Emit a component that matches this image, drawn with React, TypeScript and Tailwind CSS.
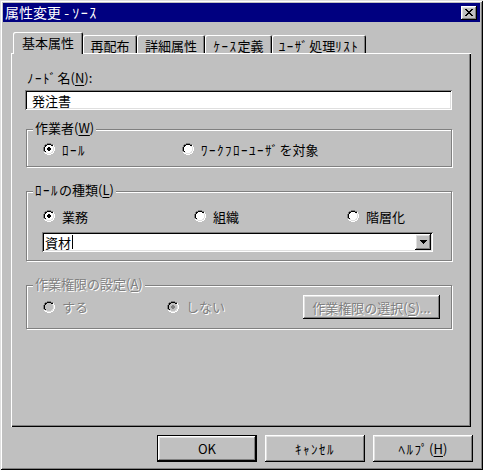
import React from "react";

type PixelArtProps = {
  rows: string[];
  colors: Record<string, string>;
  className?: string;
};

// tiny bitmap glyphs (radio, close X, combo arrow) drawn pixel by pixel
function PixelArt({ rows, colors, className = "" }: PixelArtProps) {
  const w = rows[0].length;
  const h = rows.length;
  const rects: React.ReactNode[] = [];
  rows.forEach((row, y) =>
    row.split("").forEach((ch, x) => {
      const fill = colors[ch];
      if (fill) rects.push(<rect key={`${x}-${y}`} x={x} y={y} width={1} height={1} fill={fill} />);
    })
  );
  return (
    <svg
      width={w}
      height={h}
      viewBox={`0 0 ${w} ${h}`}
      shapeRendering="crispEdges"
      className={`shrink-0 ${className}`.trim()}
    >
      {rects}
    </svg>
  );
}

const RADIO = [
  "....GGGG....",
  "..GGKKKKGG..",
  ".GKKffffKKW.",
  ".GKffffffLW.",
  "GKffffffffLW",
  "GKffffffffLW",
  "GKffffffffLW",
  "GKffffffffLW",
  ".GKffffffLW.",
  ".WLLffffLLW.",
  "..WWLLLLWW..",
  "....WWWW....",
];

const DOT: Record<number, number[]> = { 4: [5, 6], 5: [4, 5, 6, 7], 6: [4, 5, 6, 7], 7: [5, 6] };

const CLOSE_X = ["KK....KK", ".KK..KK.", "..KKKK..", "...KK...", "..KKKK..", ".KK..KK.", "KK....KK"];

const ARROW = ["KKKKKKK", ".KKKKK.", "..KKK..", "...K..."];

const raised =
  "shadow-[inset_-1px_-1px_0_#000,inset_1px_1px_0_#fff,inset_-2px_-2px_0_#808080,inset_2px_2px_0_#dfdfdf]";
const sunken =
  "shadow-[inset_1px_1px_0_#808080,inset_-1px_-1px_0_#fff,inset_2px_2px_0_#000,inset_-2px_-2px_0_#dfdfdf]";
const dim = "text-[#808080] [text-shadow:1px_1px_0_#fff]";

// half-width katakana in the old bitmap font sit wider than Noto's, so space them out
function Jp({ text }: { text: string }) {
  const parts = text.split(/([\uFF61-\uFF9F]+)/);
  return (
    <>
      {parts.map((p, i) =>
        i % 2 ? (
          <span key={i} className="tracking-[1.5px]">
            {p}
          </span>
        ) : (
          p
        )
      )}
    </>
  );
}

function Radio({ checked = false, disabled = false }: { checked?: boolean; disabled?: boolean }) {
  const rows = RADIO.map((row, y) =>
    row
      .split("")
      .map((ch, x) => (checked && DOT[y]?.includes(x) ? "D" : ch))
      .join("")
  );
  return (
    <PixelArt
      rows={rows}
      colors={{
        G: "#808080",
        K: "#000000",
        W: "#ffffff",
        L: "#dfdfdf",
        f: disabled ? "#c0c0c0" : "#ffffff",
        D: disabled ? "#808080" : "#000000",
      }}
    />
  );
}

function RadioItem({
  label,
  checked,
  disabled,
  className = "",
}: {
  label: string;
  checked?: boolean;
  disabled?: boolean;
  className?: string;
}) {
  return (
    <div className={`flex items-center gap-[7px] ${className}`.trim()}>
      <Radio checked={checked} disabled={disabled} />
      <span className={`leading-[15px] ${disabled ? dim : ""}`}>
        <Jp text={label} />
      </span>
    </div>
  );
}

function Accel({ before, letter, after = ")" }: { before: string; letter: string; after?: string }) {
  return (
    <>
      <Jp text={before} />
      <span className="underline underline-offset-[2px]">{letter}</span>
      {after}
    </>
  );
}

function Group({
  label,
  disabled,
  className = "",
  children,
}: {
  label: React.ReactNode;
  disabled?: boolean;
  className?: string;
  children: React.ReactNode;
}) {
  return (
    <div
      className={`relative ml-[1px] w-[426px] border border-[#808080] shadow-[1px_1px_0_#fff,inset_1px_1px_0_#fff] ${className}`.trim()}
    >
      <span
        className={`absolute left-[6px] top-[-10px] bg-[#c0c0c0] px-[2px] leading-[15px] ${disabled ? dim : ""}`}
      >
        {label}
      </span>
      {children}
    </div>
  );
}

const tabs = [
  { label: "基本属性", w: "w-[70px]" },
  { label: "再配布", w: "w-[54px]" },
  { label: "詳細属性", w: "w-[68px]" },
  { label: "ｹｰｽ定義", w: "w-[67px]" },
  { label: "ﾕｰｻﾞ処理ﾘｽﾄ", w: "w-[94px]" },
];

export default function App() {
  return (
    <div className="flex h-[470px] w-[483px] flex-col bg-[#c0c0c0] p-[3px] font-['Noto_Sans_CJK_JP',sans-serif] text-[13px] text-black shadow-[inset_1px_1px_0_#dfdfdf,inset_-1px_-1px_0_#000,inset_2px_2px_0_#fff,inset_-2px_-2px_0_#808080]">
      {/* title bar */}
      <div className="flex h-[19px] items-center justify-between bg-[#000080] pl-[2px] pr-[3px]">
        <span className="text-[14px] leading-[15px] text-white">
          属性変更 - <Jp text="ｿｰｽ" />
        </span>
        <div className={`flex h-[14px] w-[16px] items-center justify-center bg-[#c0c0c0] ${raised}`}>
          <PixelArt rows={CLOSE_X} colors={{ K: "#000" }} className="mb-[1px]" />
        </div>
      </div>

      {/* tabs */}
      <div className="ml-[10px] mt-[10px] flex h-[21px] items-end">
        {tabs.map((t, i) =>
          i === 0 ? (
            <div
              key={t.label}
              className={`relative z-10 -mb-[1px] h-[22px] ${t.w} rounded-t-[2px] bg-[#c0c0c0] pt-[3px] text-center leading-[15px] shadow-[inset_1px_1px_0_#fff,inset_-1px_0_0_#000,inset_-2px_0_0_#808080]`}
            >
              <Jp text={t.label} />
            </div>
          ) : (
            <div
              key={t.label}
              className={`h-[18px] ${t.w} rounded-t-[2px] pt-[3px] text-center leading-[15px] shadow-[inset_1px_1px_0_#fff,inset_-1px_0_0_#000,inset_-2px_0_0_#808080]`}
            >
              <Jp text={t.label} />
            </div>
          )
        )}
      </div>

      {/* tab page */}
      <div className="ml-[8px] flex h-[374px] w-[460px] flex-col pl-[14px] pt-[17px] shadow-[inset_1px_1px_0_#fff,inset_-1px_-1px_0_#000,inset_-2px_-2px_0_#808080]">
        <span className="ml-[2px] leading-[15px]">
          <Accel before="ﾉｰﾄﾞ名(" letter="N" after="):" />
        </span>
        <div className={`mt-[5px] flex h-[20px] w-[427px] items-center bg-white pl-[7px] leading-[15px] ${sunken}`}>
          発注書
        </div>

        <Group label={<Accel before="作業者(" letter="W" />} className="mt-[19px] h-[38px]">
          <div className="mt-[11px] flex h-[16px] items-center pl-[16px]">
            <RadioItem label="ﾛｰﾙ" checked className="w-[139px]" />
            <RadioItem label="ﾜｰｸﾌﾛｰﾕｰｻﾞを対象" />
          </div>
        </Group>

        <Group label={<Accel before="ﾛｰﾙの種類(" letter="L" />} className="mt-[24px] h-[70px]">
          <div className="mt-[16px] flex h-[16px] items-center pl-[16px]">
            <RadioItem label="業務" checked className="w-[151px]" />
            <RadioItem label="組織" className="w-[153px]" />
            <RadioItem label="階層化" />
          </div>
          <div className={`ml-[15px] mt-[8px] flex h-[20px] w-[391px] items-center bg-white pl-[3px] pr-[2px] ${sunken}`}>
            <span className="leading-[15px]">資材</span>
            <span className="ml-[1px] h-[14px] w-[1px] bg-black" />
            <div className={`ml-auto flex h-[16px] w-[16px] items-center justify-center bg-[#c0c0c0] ${raised}`}>
              <PixelArt rows={ARROW} colors={{ K: "#000" }} />
            </div>
          </div>
        </Group>

        <Group label={<Accel before="作業権限の設定(" letter="A" />} disabled className="mt-[24px] h-[44px]">
          <div className="mt-[9px] flex h-[24px] items-start pl-[16px]">
            <RadioItem label="する" disabled className="mt-[4px] w-[124px]" />
            <RadioItem label="しない" checked disabled className="mt-[4px] w-[136px]" />
            <div className={`flex h-[24px] w-[137px] items-center justify-center leading-[15px] ${raised} ${dim}`}>
              <Accel before="作業権限の選択(" letter="S" after=")..." />
            </div>
          </div>
        </Group>
      </div>

      {/* dialog buttons */}
      <div className="mt-[8px] flex justify-end gap-[8px] pr-[7px]">
        <div className="flex h-[27px] w-[100px] items-center justify-center border border-black leading-[15px] shadow-[inset_-1px_-1px_0_#000,inset_1px_1px_0_#fff,inset_-2px_-2px_0_#808080,inset_2px_2px_0_#dfdfdf]">
          OK
        </div>
        <div className={`flex h-[27px] w-[100px] items-center justify-center leading-[15px] ${raised}`}>
          <Jp text="ｷｬﾝｾﾙ" />
        </div>
        <div className={`flex h-[27px] w-[100px] items-center justify-center leading-[15px] ${raised}`}>
          <Accel before="ﾍﾙﾌﾟ(" letter="H" />
        </div>
      </div>
    </div>
  );
}
